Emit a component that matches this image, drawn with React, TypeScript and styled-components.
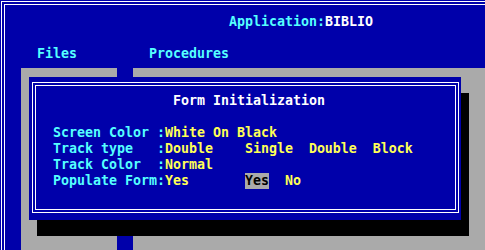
import React from 'react';
import styled, { createGlobalStyle } from 'styled-components';

const palette = {
  BLUE: '#0000aa',
  CYAN: '#55ffff',
  YELLOW: '#ffff55',
  WHITE: '#ffffff',
  GRAY: '#aaaaaa',
  BLACK: '#000000',
};

const GlobalStyle = createGlobalStyle`
  html, body {
    margin: 0;
    padding: 0;
    background: ${palette.BLUE};
  }
  * {
    box-sizing: border-box;
  }
`;

const Screen = styled.div`
  position: relative;
  width: 485px;
  height: 250px;
  overflow: hidden;
  padding: 1px 0 0 1px;
  background: ${palette.BLUE};
  font-family: 'DejaVu Sans Mono', 'Liberation Mono', monospace;
  font-size: 13.29px;
  font-weight: bold;
  line-height: 16px;
  white-space: pre;
`;

/* double line frame of the whole screen, runs off right and bottom */
const OuterFrame = styled.div`
  width: 560px;
  height: 300px;
  border: 1px solid ${palette.WHITE};
  padding: 2px;
`;

const InnerFrame = styled.div`
  height: 100%;
  border: 1px solid ${palette.WHITE};
  display: flex;
  flex-direction: column;
`;

const TitleBar = styled.div`
  margin-top: 9px;
  height: 16px;
  padding-left: 224px;
`;

const MenuBar = styled.nav`
  margin-top: 16px;
  height: 16px;
  display: flex;
  gap: 72px;
  padding-left: 32px;
`;

const Text = styled.span<{ $color: string }>`
  color: ${(p) => p.$color};
`;

const Workspace = styled.div`
  position: relative;
  flex: 1;
  margin-top: 6px;
  margin-left: 16px;
  display: flex;
  gap: 16px;
`;

const GrayPane = styled.div<{ $width?: number }>`
  background: ${palette.GRAY};
  ${(p) => (p.$width ? `width: ${p.$width}px;` : 'flex: 1;')}
`;

const Dialog = styled.section`
  position: absolute;
  left: 8px;
  top: 9px;
  width: 432px;
  height: 143px;
  padding: 5px 2px 7px 3px;
  background: ${palette.BLUE};
  box-shadow: 8px 16px 0 ${palette.BLACK};
`;

const DialogFrame = styled.div`
  height: 100%;
  border: 1px solid ${palette.WHITE};
  padding: 2px;
`;

const DialogBody = styled.div`
  height: 100%;
  border: 1px solid ${palette.WHITE};
  padding-top: 7px;
`;

const DialogTitle = styled.h1`
  margin: 0 0 16px;
  height: 16px;
  padding-left: 137px;
  font: inherit;
  color: ${palette.WHITE};
`;

const Field = styled.div`
  height: 16px;
  padding-left: 17px;
`;

const Selected = styled.span`
  display: inline-block;
  height: 16px;
  background: ${palette.GRAY};
  color: ${palette.BLACK};
  vertical-align: top;
`;

const fields = [
  { label: 'Screen Color :', value: 'White On Black' },
  { label: 'Track type   :', value: 'Double    Single  Double  Block' },
  { label: 'Track Color  :', value: 'Normal' },
];

const App = () => {
  return (
    <>
      <GlobalStyle />
      <Screen>
        <OuterFrame>
          <InnerFrame>
            <TitleBar>
              <Text $color={palette.CYAN}>Application:</Text>
              <Text $color={palette.WHITE}>BIBLIO</Text>
            </TitleBar>
            <MenuBar>
              <Text $color={palette.CYAN}>Files</Text>
              <Text $color={palette.CYAN}>Procedures</Text>
            </MenuBar>
            <Workspace>
              <GrayPane $width={96} />
              <GrayPane />
              <Dialog>
                <DialogFrame>
                  <DialogBody>
                    <DialogTitle>Form Initialization</DialogTitle>
                    {fields.map((f) => (
                      <Field key={f.label}>
                        <Text $color={palette.CYAN}>{f.label}</Text>
                        <Text $color={palette.YELLOW}>{f.value}</Text>
                      </Field>
                    ))}
                    <Field>
                      <Text $color={palette.CYAN}>Populate Form:</Text>
                      <Text $color={palette.YELLOW}>{'Yes       '}</Text>
                      <Selected>Yes</Selected>
                      <Text $color={palette.YELLOW}>{'  No'}</Text>
                    </Field>
                  </DialogBody>
                </DialogFrame>
              </Dialog>
            </Workspace>
          </InnerFrame>
        </OuterFrame>
      </Screen>
    </>
  );
};

export default App;
